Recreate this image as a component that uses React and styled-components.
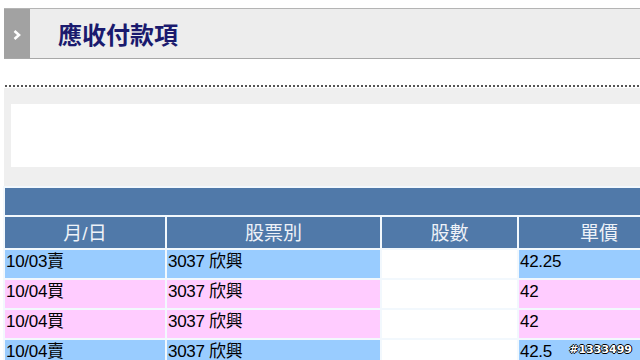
import React from 'react';
import styled, { createGlobalStyle } from 'styled-components';

const GlobalStyle = createGlobalStyle`
  html, body {
    margin: 0;
    padding: 0;
    background: #ffffff;
    overflow: hidden;
    font-family: "Liberation Sans", "Noto Sans CJK TC", sans-serif;
  }
`;

const rows = [
  { date: '10/03賣', stock: '3037 欣興', price: '42.25', tone: 'sell' },
  { date: '10/04買', stock: '3037 欣興', price: '42', tone: 'buy' },
  { date: '10/04買', stock: '3037 欣興', price: '42', tone: 'buy' },
  { date: '10/04賣', stock: '3037 欣興', price: '42.5', tone: 'sell' },
];

export default function App() {
  return (
    <>
      <GlobalStyle />
      <S_Page>
        <S_TitleBar>
          <S_Arrow>
            <svg width="8" height="10" viewBox="0 0 8 10">
              <path d="M1.5 1 L6 5 L1.5 9" fill="none" stroke="#ffffff" strokeWidth="2.6" />
            </svg>
          </S_Arrow>
          <S_Title>應收付款項</S_Title>
        </S_TitleBar>

        <S_Dots />

        <S_Panel>
          <S_Blank />
        </S_Panel>

        <S_Table>
          <colgroup>
            <col style={{ width: 160 }} />
            <col style={{ width: 213 }} />
            <col style={{ width: 135 }} />
            <col style={{ width: 160 }} />
          </colgroup>
          <tbody>
            <tr>
              <S_Band colSpan={4} />
            </tr>
            <tr>
              <S_Head>月/日</S_Head>
              <S_Head>股票別</S_Head>
              <S_Head>股數</S_Head>
              <S_Head>單價</S_Head>
            </tr>
            {rows.map((r, i) => (
              <tr key={i}>
                <S_Cell $tone={r.tone}>{r.date}</S_Cell>
                <S_Cell $tone={r.tone}>{r.stock}</S_Cell>
                <S_Cell $tone="none"></S_Cell>
                <S_Cell $tone={r.tone}>{r.price}</S_Cell>
              </tr>
            ))}
          </tbody>
        </S_Table>

        <S_Mark>#1333499</S_Mark>
      </S_Page>
    </>
  );
}

const S_Page = styled.div`
  position: relative;
  width: 640px;
  height: 360px;
  padding: 8px 0 0 4px;
  box-sizing: border-box;
  overflow: hidden;
`;

const S_TitleBar = styled.div`
  display: flex;
  align-items: stretch;
  height: 51px;
  width: 700px;
  box-sizing: border-box;
  border-top: 1px solid #b4b4b4;
  border-bottom: 1px solid #a8a8a8;
  background: #ededed;
`;

const S_Arrow = styled.div`
  width: 26px;
  background: #a2a2a2;
  display: flex;
  align-items: center;
  justify-content: center;
  padding-top: 2px;
`;

const S_Title = styled.div`
  margin-left: 28px;
  display: flex;
  align-items: center;
  font-size: 24px;
  font-weight: bold;
  color: #1a1a6e;
`;

const S_Dots = styled.div`
  margin-top: 26px;
  height: 2px;
  width: 700px;
  background-image: radial-gradient(circle, #555555 0.8px, transparent 1px);
  background-size: 4px 2px;
  background-repeat: repeat-x;
`;

const S_Panel = styled.div`
  margin-top: 1px;
  width: 700px;
  height: 98px;
  box-sizing: border-box;
  padding: 16px 0 0 7px;
  background: #efefef;
`;

const S_Blank = styled.div`
  height: 63px;
  background: #ffffff;
`;

const S_Table = styled.table`
  margin-left: -1px;
  table-layout: fixed;
  width: 678px;
  border-collapse: separate;
  border-spacing: 2px;
  background: #f2f8fd;
`;

const S_Band = styled.td`
  height: 27px;
  padding: 0;
  background: #5079a9;
`;

const S_Head = styled.td`
  height: 29px;
  padding: 0 0 2px;
  background: #5079a9;
  color: #eef2f8;
  text-align: center;
  font-size: 19px;
  vertical-align: middle;
`;

const toneColors = {
  sell: '#99ccff',
  buy: '#ffccff',
  none: '#ffffff',
};

const S_Cell = styled.td`
  height: 28px;
  padding: 0 0 4px 1px;
  box-sizing: border-box;
  background: ${(p) => toneColors[p.$tone]};
  color: #000000;
  font-size: 17px;
  line-height: 20px;
  letter-spacing: -0.3px;
  vertical-align: middle;
  white-space: nowrap;
`;

const S_Mark = styled.div`
  position: absolute;
  right: 8px;
  bottom: 4px;
  font-size: 11px;
  font-weight: bold;
  color: #ffffff;
  text-shadow: -1px 0 #000, 1px 0 #000, 0 -1px #000, 0 1px #000;
  font-family: "DejaVu Sans", sans-serif;
`;
